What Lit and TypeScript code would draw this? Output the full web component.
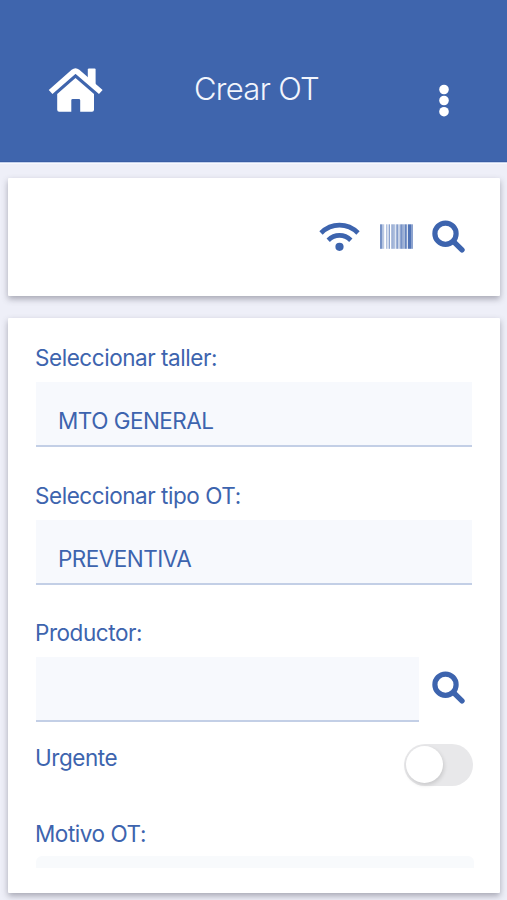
import { LitElement, html, css, svg } from "lit";
import { customElement, property } from "lit/decorators.js";

const BARS: [number, number, number][] = [
  [0, 2.2, 0.7], [2.2, 2, 0.35], [6.2, 1.2, 0.5], [8.6, 1.4, 0.6], [11.2, 2.6, 0.5],
  [13.8, 1.6, 0.4], [16.3, 1.6, 0.7], [18.4, 1.2, 0.5], [20.2, 2.4, 0.7], [22.6, 1.8, 0.5],
  [24.6, 2.2, 0.8], [27.8, 3.2, 0.9], [31, 2, 0.6],
];

@customElement("search-icon")
class SearchIcon extends LitElement {
  static styles = css`
    :host { display: block; width: 34px; height: 34px; }
    svg { display: block; }
  `;
  render() {
    return html`<svg width="34" height="34" viewBox="0 0 34 34" fill="none" stroke="#3d64ae">
      <circle cx="13.5" cy="13.7" r="10.6" stroke-width="5.2" />
      <path d="M22.6 22.6L30 29.9" stroke-width="5.4" stroke-linecap="round" />
    </svg>`;
  }
}

@customElement("form-field")
class FormField extends LitElement {
  @property() label = "";
  @property() value = "";
  static styles = css`
    :host { display: block; }
    .label { height: 28px; line-height: 28px; margin-left: -1px; white-space: nowrap; }
    .row { display: flex; margin-top: 10px; }
    .box {
      flex: 1; height: 63px; box-sizing: content-box; padding-left: 22px;
      background: #f7f9fd; border-bottom: 2px solid #c3cfe6;
      line-height: 77px; white-space: nowrap; letter-spacing: -0.52px;
    }
  `;
  render() {
    return html`<div class="label">${this.label}</div>
      <div class="row"><div class="box">${this.value}</div><slot></slot></div>`;
  }
}

@customElement("app-root")
class AppRoot extends LitElement {
  static styles = css`
    :host {
      display: flex; flex-direction: column; height: 900px; overflow: hidden;
      background: #eeeff8; color: #3d64ae;
      font: 400 22.5px/28px Inter, "Liberation Sans", sans-serif;
      letter-spacing: -0.45px;
    }
    svg { display: block; }
    .bar {
      flex: none; height: 162px; box-sizing: border-box; padding: 67px 57px 0 48px;
      background: #3f65ad; border-bottom: 1px solid #3a5da4; color: #fff;
      display: grid; grid-template-columns: 146px 1fr 12px; align-items: start;
      box-shadow: 0 1px 0 #c3d0ec, 0 2px 0 #f7f8fd;
    }
    .title { margin: 1px 0 0; font-size: 31px; font-weight: 300; line-height: 42px; letter-spacing: -0.7px; color: #f2f5fc; }
    .dots { margin-top: 17px; }
    .card { margin: 0 7px 0 8px; background: #fff; border-radius: 1px; box-shadow: 0 3px 6px rgba(70, 70, 85, 0.42); flex: none; box-sizing: border-box; }
    .tools { margin-top: 16px; height: 118px; padding: 42px 34px 0 0; display: flex; justify-content: flex-end; align-items: flex-start; }
    .wifi { margin: 1px 20px 0 0; }
    .code { margin: 4px 19px 0 0; }
    .form { margin-top: 22px; height: 575px; padding: 26px 28px 0; display: flex; flex-direction: column; }
    .gap { margin-bottom: 34.5px; }
    .find { margin: 14px 6px 0 13px; }
    .urgent { margin-top: 22px; height: 42px; display: flex; justify-content: space-between; }
    .urgent span, .reason { margin-left: -1px; }
    .toggle { width: 69px; height: 42px; border-radius: 21px; background: #e8e8ea; box-sizing: border-box; padding: 2px; margin-right: -1px; }
    .knob { width: 37px; height: 37px; border-radius: 50%; background: #fff; box-shadow: 1px 2px 4px rgba(0, 0, 0, 0.14); }
    .reason { margin-top: 34px; }
    .area { margin: 8px -2px 0 0; height: 12px; background: #f8fafc; border-radius: 6px 6px 0 0; }
  `;
  render() {
    return html`
      <header class="bar">
        <svg width="56" height="46" viewBox="0 0 56 46" fill="#fff">
          <path d="M2.6 25L25.5 4.9Q27.5 3.2 29.5 4.9L52.8 25" fill="none" stroke="#fff" stroke-width="5.6" stroke-linejoin="round" />
          <path d="M41 1.5h5.6q1 0 1 1V19.6l-7.8-6.8V2.5q0-1 1.2-1z" />
          <path d="M27.5 10.9L46 27v15.8q0 2-2 2H32.2V33.3q0-1.3-1.3-1.3h-6.3q-1.3 0-1.3 1.3v11.5H11.2q-2 0-2-2V27z" />
        </svg>
        <h1 class="title">Crear OT</h1>
        <svg class="dots" width="12" height="34" viewBox="0 0 12 34" fill="#fff">
          <circle cx="6" cy="5.5" r="4.8" /><circle cx="6" cy="16.5" r="4.8" /><circle cx="6" cy="27.7" r="4.8" />
        </svg>
      </header>
      <section class="card tools">
        <svg class="wifi" width="41" height="32" viewBox="0 0 41 32" fill="none" stroke="#3d64ae" stroke-width="4.8" stroke-linecap="butt">
          <path d="M2 12Q10 4.2 20.5 4.2T39 12" /><path d="M9.2 19.2Q14.2 14.4 20.5 14.4T31.8 19.2" />
          <circle cx="20.5" cy="25.8" r="4.1" fill="#3d64ae" stroke="none" />
        </svg>
        <svg class="code" width="33" height="25" viewBox="0 0 33 25" fill="#3d64ae">
          ${BARS.map(([x, w, o]) => svg`<rect x=${x} y="0.3" width=${w} height="24.5" opacity=${o} />`)}
        </svg>
        <search-icon></search-icon>
      </section>
      <section class="card form">
        <form-field class="gap" label="Seleccionar taller:" value="MTO GENERAL"></form-field>
        <form-field class="gap" label="Seleccionar tipo OT:" value="PREVENTIVA"></form-field>
        <form-field label="Productor:"><search-icon class="find"></search-icon></form-field>
        <div class="urgent"><span>Urgente</span><div class="toggle"><div class="knob"></div></div></div>
        <div class="reason">Motivo OT:</div>
        <div class="area"></div>
      </section>
    `;
  }
}
